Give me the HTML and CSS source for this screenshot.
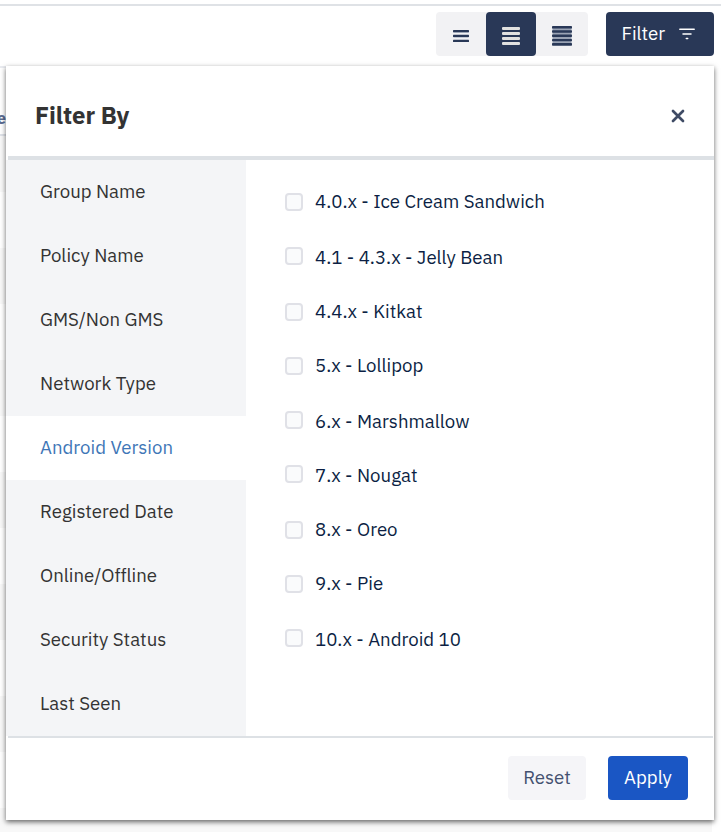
FILE: index.html
```html
<!DOCTYPE html>
<html lang="en">
<head>
<meta charset="utf-8">
<title>Filter By</title>
<link rel="stylesheet" href="styles.css">
</head>
<body>
<div class="page">
  <div class="toolbar">
    <div class="density">
      <button class="density-btn" aria-label="Compact"><svg width="50" height="44" viewBox="0 0 50 44"><g fill="#c5cbd6"><rect x="17.5" y="20" width="15" height="1"/><rect x="17.5" y="25" width="15" height="1"/></g><g fill="#293857"><rect x="17" y="18" width="16" height="2.3" rx=".5"/><rect x="17" y="22.8" width="16" height="2.3" rx=".5"/><rect x="17" y="27.7" width="16" height="2.3" rx=".5"/></g></svg></button>
      <button class="density-btn density-active" aria-label="Normal"><svg width="50" height="44" viewBox="0 0 50 44"><g fill="#e1e1e0"><rect x="16" y="15" width="18" height="3" rx="1"/><rect x="16" y="20" width="18" height="3" rx="1"/><rect x="16" y="25" width="18" height="3" rx="1"/><rect x="16" y="30" width="18" height="3" rx="1"/></g></svg></button>
      <button class="density-btn density-wide" aria-label="Dense"><svg width="52" height="44" viewBox="0 0 52 44"><rect x="16.5" y="15" width="19" height="18" fill="#9aa3b4"/><g fill="#293857"><rect x="16" y="14" width="20" height="2.6" rx=".7"/><rect x="16" y="18.3" width="20" height="2.4" rx=".7"/><rect x="16" y="22.6" width="20" height="2.4" rx=".7"/><rect x="16" y="26.9" width="20" height="2.4" rx=".7"/><rect x="16" y="31.1" width="20" height="2.6" rx=".7"/></g></svg></button>
    </div>
    <button class="filter-btn"><span class="filter-label">Filter</span><svg width="16" height="12" viewBox="0 0 16 12"><path d="M.8 1.2h14.4M4 6h8M7.3 10.4h1.4" stroke="#fff" stroke-width="1.5" stroke-linecap="round"/></svg></button>
  </div>
  <div class="table">
    <div class="table-head">e</div>
    <div class="table-row"></div><div class="table-row"></div><div class="table-row"></div><div class="table-row"></div>
    <div class="table-row"></div><div class="table-row"></div><div class="table-row"></div><div class="table-row"></div>
    <div class="table-row"></div><div class="table-row"></div><div class="table-row"></div><div class="table-row"></div>
    <div class="table-row"></div>
  </div>
  <section class="dialog">
    <header class="dialog-head">
      <h2 class="title">Filter By</h2>
      <button class="close" aria-label="Close"><svg width="14" height="14" viewBox="0 0 14 14"><path d="M2 2l10 10M12 2L2 12" stroke="#3f4b65" stroke-width="2.7" stroke-linecap="round"/></svg></button>
    </header>
    <div class="dialog-body">
      <nav class="tabs">
        <a class="tab">Group Name</a>
        <a class="tab">Policy Name</a>
        <a class="tab">GMS/Non GMS</a>
        <a class="tab">Network Type</a>
        <a class="tab tab-active">Android Version</a>
        <a class="tab">Registered Date</a>
        <a class="tab">Online/Offline</a>
        <a class="tab">Security Status</a>
        <a class="tab">Last Seen</a>
      </nav>
      <div class="options">
        <label class="option"><i class="box"></i><span class="option-text">4.0.x - Ice Cream Sandwich</span></label>
        <label class="option"><i class="box"></i><span class="option-text">4.1 - 4.3.x - Jelly Bean</span></label>
        <label class="option"><i class="box"></i><span class="option-text">4.4.x - Kitkat</span></label>
        <label class="option"><i class="box"></i><span class="option-text">5.x - Lollipop</span></label>
        <label class="option"><i class="box"></i><span class="option-text">6.x - Marshmallow</span></label>
        <label class="option"><i class="box"></i><span class="option-text">7.x - Nougat</span></label>
        <label class="option"><i class="box"></i><span class="option-text">8.x - Oreo</span></label>
        <label class="option"><i class="box"></i><span class="option-text">9.x - Pie</span></label>
        <label class="option"><i class="box"></i><span class="option-text">10.x - Android 10</span></label>
      </div>
    </div>
    <footer class="dialog-foot">
      <button class="btn btn-reset">Reset</button>
      <button class="btn btn-apply">Apply</button>
    </footer>
  </section>
</div>
</body>
</html>
```
FILE: styles.css
```css
* { box-sizing: border-box; }
body { margin: 0; background: #fff; font-family: "IBM Plex Sans", Roboto, "Liberation Sans", sans-serif; font-size: 18.65px; color: #333; }
button { border: 0; padding: 0; font: inherit; }
svg { display: block; fill: none; }
.page { position: relative; width: 726px; height: 832px; overflow: hidden; padding-top: 4px; }
.toolbar { display: flex; justify-content: flex-end; gap: 18px; width: 721px; height: 62px; padding: 6px 7px 0 0; border-top: 2px solid #dfe2e6; }
.density { display: flex; height: 44px; border-radius: 4px; background: #f2f2f4; }
.density-btn { width: 50px; height: 44px; border-radius: 4px; background: transparent; }
.density-wide { width: 52px; }
.density-active { background: #293857; }
.filter-btn { display: flex; align-items: center; gap: 14px; width: 108px; height: 44px; padding-left: 16px; border-radius: 4px; background: #293857; color: #fff; }
.filter-label { width: 43px; padding-bottom: 2px; text-align: left; text-indent: -.5px; }
.table { width: 712px; border-top: 2px solid #e9ebf0; }
.table-head { height: 68px; padding-top: 39px; border-bottom: 2px solid #dfe2e8; color: #5d6c91; font-size: 16px; font-weight: 700; line-height: 22px; text-indent: -3px; }
.table-row { height: 56px; background: #fff; }
.table-row:nth-child(even) { background: #f8f8f8; }
.dialog { position: absolute; left: 6px; top: 66px; display: flex; flex-direction: column; width: 708px; height: 754px; background: #fff; box-shadow: 0 2px 5px rgba(0,0,0,.6); }
.dialog-head { display: flex; justify-content: space-between; align-items: center; height: 94px; margin-left: 2px; padding: 9px 29px 0 27px; border-bottom: 4px solid #dde1e5; }
.title { margin: 0; padding-bottom: 2px; font-size: 24px; font-weight: 700; line-height: 30px; letter-spacing: -.05px; }
.close { width: 14px; height: 14px; background: none; }
.dialog-body { display: flex; height: 576px; }
.tabs { width: 240px; background: #f4f5f7; }
.tab { display: flex; align-items: center; height: 64px; padding: 0 0 2px 34px; white-space: nowrap; }
.tab-active { background: #fff; color: #3f77b7; }
.options { padding: 15px 0 0 39px; color: #0c1f44; }
.option { display: flex; align-items: center; gap: 12px; height: 54px; white-space: nowrap; }
.option-text { padding-bottom: 2px; }
.option:nth-child(2), .option:nth-child(5), .option:nth-child(9) { margin-top: 2px; }
.box { width: 18px; height: 18px; border: 2px solid #e0e1e7; border-radius: 4px; background: #fafbfc; }
.option:nth-child(2) .box, .option:nth-child(5) .box, .option:nth-child(6) .box, .option:nth-child(9) .box { margin-bottom: 4px; }
.dialog-foot { display: flex; justify-content: flex-end; gap: 22px; height: 84px; margin: 0 1px 0 2px; padding: 18px 25px 0 0; border-top: 2px solid #dde1e5; }
.btn { height: 44px; padding-bottom: 2px; border-radius: 4px; }
.btn-reset { width: 78px; background: #f5f5f8; color: #445170; }
.btn-apply { width: 80px; background: #1a56c4; color: #fff; }
```
